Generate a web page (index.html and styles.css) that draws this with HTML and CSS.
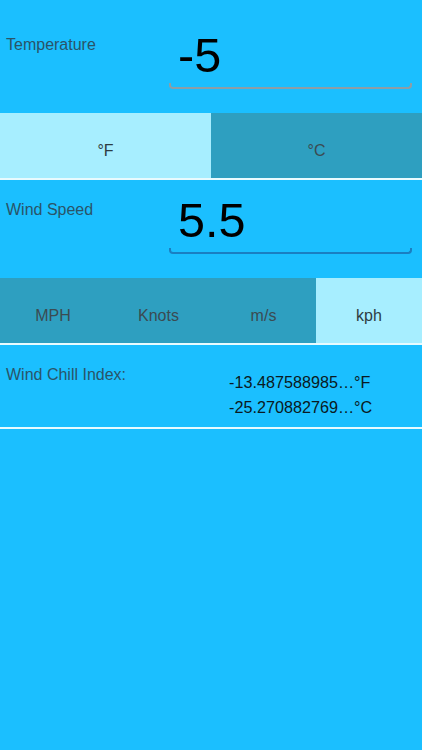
FILE: index.html
```html
<!DOCTYPE html>
<html>
<head>
<meta charset="utf-8">
<link rel="stylesheet" href="styles.css">
</head>
<body>
<div class="app">
  <section class="row row-first">
    <div class="label">Temperature</div>
    <div class="field">
      <div class="value">-5</div>
      <div class="underline gray"></div>
    </div>
  </section>
  <div class="seg two">
    <div class="opt on">°F</div>
    <div class="opt">°C</div>
  </div>
  <section class="row">
    <div class="label">Wind Speed</div>
    <div class="field">
      <div class="value">5.5</div>
      <div class="underline blue"></div>
    </div>
  </section>
  <div class="seg four">
    <div class="opt">MPH</div>
    <div class="opt">Knots</div>
    <div class="opt">m/s</div>
    <div class="opt on">kph</div>
  </div>
  <section class="result">
    <div class="label">Wind Chill Index:</div>
    <div class="values">
      <div>-13.487588985…°F</div>
      <div>-25.270882769…°C</div>
    </div>
  </section>
</div>
</body>
</html>
```
FILE: styles.css
```css
html, body {
  margin: 0;
  padding: 0;
  background: #1bbfff;
}
body {
  font-family: "Liberation Sans", Arial, sans-serif;
  width: 422px;
  height: 750px;
  overflow: hidden;
}
.app {
  display: flex;
  flex-direction: column;
}
.row {
  height: 98px;
  display: flex;
  box-sizing: border-box;
  padding-top: 20px;
}
.row-first {
  height: 113px;
  padding-top: 35px;
}
.label {
  width: 169px;
  padding-left: 6px;
  padding-top: 1px;
  box-sizing: border-box;
  font-size: 16px;
  color: #2a5468;
  line-height: 18px;
}
.field {
  width: 243px;
  display: flex;
  flex-direction: column;
}
.value {
  font-size: 48.5px;
  line-height: 37px;
  height: 37px;
  padding-left: 9px;
  padding-top: 2px;
  color: #000;
}
.underline {
  margin-top: 9px;
  height: 4px;
  border: 2px solid;
  border-top: none;
  border-radius: 0 0 4px 4px;
}
.underline.gray { border-color: #8d9ea6; }
.underline.blue { border-color: #1a7fc2; }
.seg {
  height: 67px;
  display: grid;
  border-bottom: 2px solid #e8fbff;
  box-sizing: border-box;
}
.seg.two { grid-template-columns: 211px 1fr; }
.seg.four { grid-template-columns: 106px 105px 105px 1fr; }
.opt {
  background: #2e9fc0;
  color: #3b4b52;
  font-size: 16px;
  display: flex;
  align-items: center;
  justify-content: center;
  padding-top: 10px;
  box-sizing: border-box;
}
.opt.on {
  background: #a7eeff;
  color: #2e3c42;
}
.result {
  display: flex;
  height: 84px;
  box-sizing: border-box;
  padding-top: 20px;
  border-bottom: 2px solid #e8fbff;
}
.result .label {
  width: 229px;
}
.values {
  font-size: 16.2px;
  line-height: 25px;
  color: #0a1a22;
  margin-top: 5px;
}
```
